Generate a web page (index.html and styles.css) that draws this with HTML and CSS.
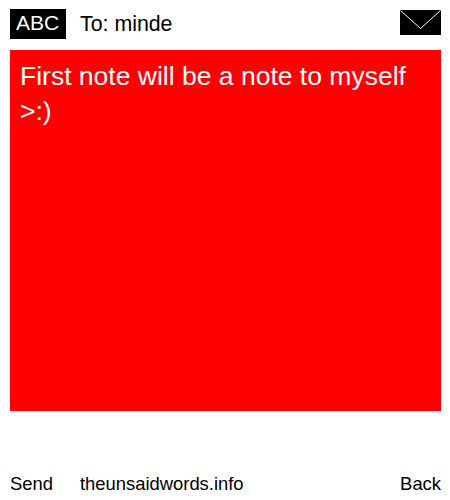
FILE: index.html
```html
<!DOCTYPE html>
<html>
<head>
<meta charset="utf-8">
<title>Note</title>
<link rel="stylesheet" href="styles.css">
</head>
<body>
<div class="app">
  <header class="top">
    <div class="mode">ABC</div>
    <div class="to">To: minde</div>
    <svg class="env" width="41" height="25" viewBox="0 0 41 25"><rect width="41" height="25" fill="#000"/><path d="M0.5 0.5L20.5 18.5L40.5 0.5" fill="none" stroke="#fff" stroke-width="1"/></svg>
  </header>
  <main class="note">First note will be a note to myself &gt;:)</main>
  <footer class="bottom">
    <span class="send">Send</span>
    <span class="site">theunsaidwords.info</span>
    <span class="back">Back</span>
  </footer>
</div>
</body>
</html>
```
FILE: styles.css
```css
html, body { margin: 0; padding: 0; background: #fff; }
.app {
  width: 431px;
  height: 500px;
  padding: 0 9px 0 10px;
  display: flex;
  flex-direction: column;
  font-family: "Liberation Sans", Arial, sans-serif;
  color: #000;
}
.top {
  height: 50px;
  display: flex;
  align-items: flex-start;
  flex: none;
}
.mode {
  margin-top: 9px;
  width: 55px;
  height: 30px;
  padding-right: 1px;
  background: #000;
  color: #fff;
  font-size: 21px;
  line-height: 28px;
  text-align: center;
}
.to {
  margin-top: 9px;
  margin-left: 14px;
  font-size: 21.33px;
  line-height: 30px;
  flex: 1;
}
.env { margin-top: 10px; display: block; }
.note {
  height: 361px;
  flex: none;
  box-sizing: border-box;
  background: #f00;
  color: #fff;
  font-size: 26.5px;
  line-height: 35px;
  padding: 9px 10px;
}
.bottom {
  margin-top: 61px;
  display: flex;
  font-size: 18.4px;
  line-height: 24px;
}
.send { width: 70px; }
.site { flex: 1; }
```
